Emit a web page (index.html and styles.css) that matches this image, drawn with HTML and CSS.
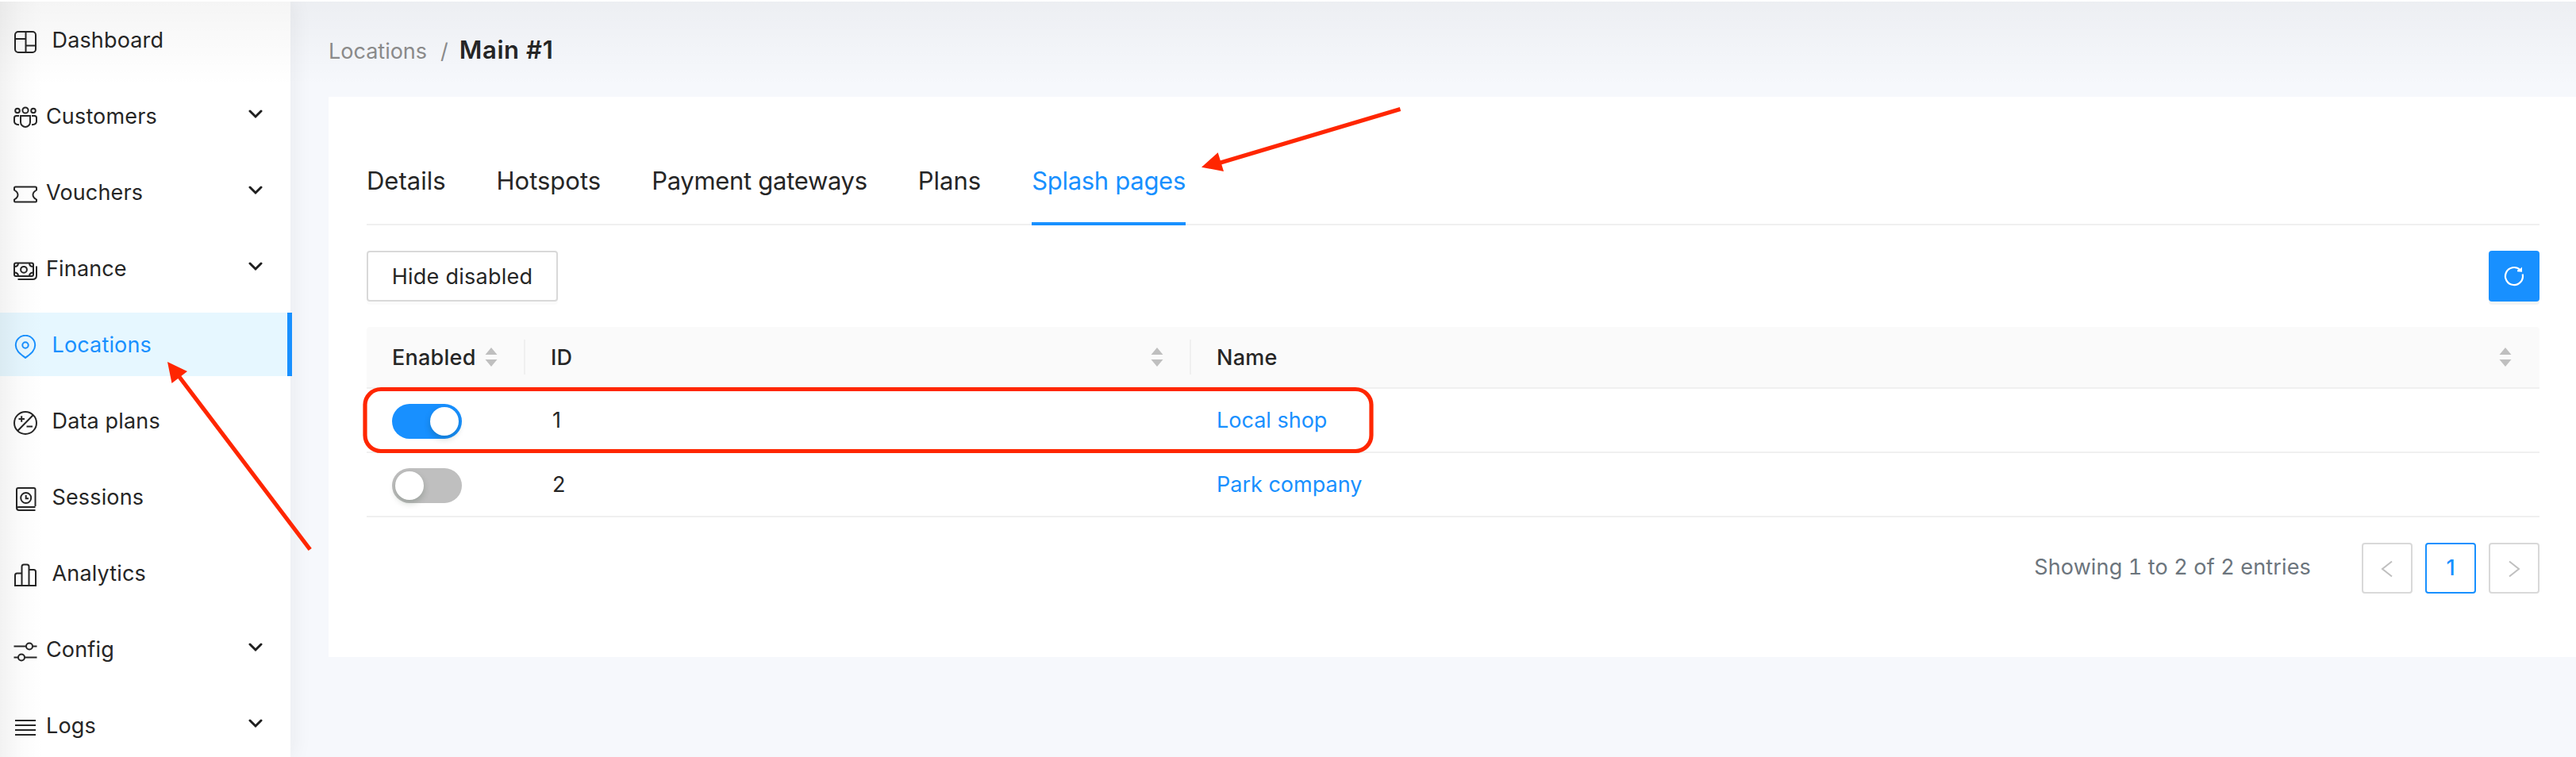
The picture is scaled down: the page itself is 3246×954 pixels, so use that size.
FILE: index.html
```html
<!DOCTYPE html>
<html lang="en">
<head>
<meta charset="utf-8">
<title>Main #1</title>
<link rel="stylesheet" href="styles.css">
</head>
<body>
<div class="app">
  <nav class="sidebar">
    <a class="item"><svg class="icon" viewBox="0 0 30 30"><rect x="2" y="2" width="26" height="26" rx="4"/><path d="M15.500 2v26M2 11h13.500M15.500 19.500H28"/></svg><span class="label">Dashboard</span></a>
    <a class="item sub"><svg class="icon" viewBox="0 0 30 30"><circle cx="5" cy="5.500" r="2.800"/><circle cx="15" cy="5" r="3.600"/><circle cx="25" cy="5.500" r="2.800"/><path d="M9 12h12v8c0 3.500-3 6-6 6s-6-2.500-6-6zM7 12H3.500Q1 12 1 14.500V19q0 4 6 4.300M23 12h3.500Q29 12 29 14.500V19q0 4-6 4.300"/></svg><span class="label">Customers</span><svg class="chev" viewBox="0 0 18 12"><path d="M2 2l7 7 7-7"/></svg></a>
    <a class="item sub"><svg class="icon" viewBox="0 0 30 30"><path d="M2.500 5.500h25q1.500 0 1.500 1.500v2.500q-4.500 2.500-4.500 6t4.500 6V23q0 1.500-1.500 1.500h-25Q1 24.500 1 23v-1.500q4.500-2.500 4.500-6T1 9.500V7q0-1.500 1.500-1.500z"/></svg><span class="label">Vouchers</span><svg class="chev" viewBox="0 0 18 12"><path d="M2 2l7 7 7-7"/></svg></a>
    <a class="item sub"><svg class="icon" viewBox="0 0 30 30"><rect x="1" y="5.500" width="24" height="16.500" rx="2"/><circle cx="13" cy="13.800" r="3.900"/><path d="M6 5.500Q6 10 1 10M20 5.500Q20 10 25 10M6 22q0-4.500-5-4.500M20 22q0-4.500 5-4.500M29 9.500V21q0 5-5 5H5.500"/></svg><span class="label">Finance</span><svg class="chev" viewBox="0 0 18 12"><path d="M2 2l7 7 7-7"/></svg></a>
    <a class="item active"><svg class="icon" viewBox="0 0 30 30"><path d="M15 29C9.500 24.500 2.800 20.500 2.800 13A12.200 12.200 0 0 1 27.200 13C27.200 20.500 20.500 24.500 15 29z"/><circle cx="15" cy="13" r="3.700"/></svg><span class="label">Locations</span></a>
    <a class="item"><svg class="icon" viewBox="0 0 30 30"><circle cx="15" cy="15" r="14"/><path d="M24.800 5L5.200 25M6.500 10h7.500M10.200 6.300v7.500M16.500 19.500h7.500"/></svg><span class="label">Data plans</span></a>
    <a class="item"><svg class="icon" viewBox="0 0 30 30"><path d="M27.500 24V3q0-2-2-2H6Q4 1 4 3v23q0 3 3 3h20.500M27.500 25H6.500Q4 25 4 27"/><circle cx="15.700" cy="13.500" r="6.500"/><path d="M15.700 10v4.200h3.300"/></svg><span class="label">Sessions</span></a>
    <a class="item"><svg class="icon" viewBox="0 0 30 30"><path d="M10.500 28V4q0-2.500 2.500-2.500h4q2.500 0 2.500 2.500v24M10.500 12.500H4.500Q2 12.500 2 15v13h26V10.500Q28 8 25.500 8h-6"/></svg><span class="label">Analytics</span></a>
    <a class="item sub"><svg class="icon" viewBox="0 0 30 30"><path d="M.5 8.500h15.300M24.200 8.500h5.300M.5 22.500h5.300M14.200 22.500h15.300"/><circle cx="20" cy="8.500" r="4"/><circle cx="10" cy="22.500" r="4"/></svg><span class="label">Config</span><svg class="chev" viewBox="0 0 18 12"><path d="M2 2l7 7 7-7"/></svg></a>
    <a class="item sub"><svg class="icon" viewBox="0 0 30 30"><path d="M2 6h26M2 12h26M2 18h26M2 24h26"/></svg><span class="label">Logs</span><svg class="chev" viewBox="0 0 18 12"><path d="M2 2l7 7 7-7"/></svg></a>
  </nav>
  <main class="main">
    <div class="crumbs"><span class="crumb">Locations</span><span class="slash">/</span><span class="current">Main #1</span></div>
    <section class="card">
      <div class="tabs">
        <a class="tab">Details</a><a class="tab">Hotspots</a><a class="tab long">Payment gateways</a><a class="tab">Plans</a><a class="tab long on">Splash pages</a>
      </div>
      <div class="toolbar">
        <button class="btn"><span>Hide disabled</span></button>
        <button class="refresh"><svg viewBox="0 0 28 28"><path d="M21.500 6A11 11 0 1 0 24.700 11.500"/><path class="solid" d="M24 2.500v6.300l-6-.6v-1.800l2.600-.6z"/></svg></button>
      </div>
      <div class="table">
        <div class="row head">
          <div class="cell"><span>Enabled</span><svg class="sort" viewBox="0 0 16 24"><path d="M8 0l7.500 9H.5zM8 24l7.500-9H.5z"/></svg></div>
          <div class="cell"><span>ID</span><svg class="sort" viewBox="0 0 16 24"><path d="M8 0l7.500 9H.5zM8 24l7.500-9H.5z"/></svg></div>
          <div class="cell"><span>Name</span><svg class="sort" viewBox="0 0 16 24"><path d="M8 0l7.500 9H.5zM8 24l7.500-9H.5z"/></svg></div>
        </div>
        <div class="row">
          <div class="cell"><span class="switch checked"><i></i></span></div>
          <div class="cell"><span class="num">1</span></div>
          <div class="cell"><a class="link">Local shop</a></div>
        </div>
        <div class="row">
          <div class="cell"><span class="switch"><i></i></span></div>
          <div class="cell"><span class="num">2</span></div>
          <div class="cell"><a class="link">Park company</a></div>
        </div>
      </div>
      <div class="pager">
        <span class="total">Showing 1 to 2 of 2 entries</span>
        <span class="page"><svg viewBox="0 0 16 22"><path d="M14 1.500L2 11l12 9.500"/></svg></span>
        <span class="page now"><b>1</b></span>
        <span class="page"><svg viewBox="0 0 16 22"><path d="M2 1.500L14 11 2 20.500"/></svg></span>
      </div>
    </section>
  </main>
  <svg class="marks" viewBox="0 0 3246 954">
    <rect x="460" y="490.500" width="1268" height="78" rx="20"/>
    <path d="M390.700 692.500L226 475M1764.500 137.500L1538 205"/>
    <path class="tip" d="M211 456l25 12-19.500 15zM1514 210.700l20.700-18.400 7.300 23.700z"/>
  </svg>
</div>
</body>
</html>
```
FILE: styles.css
```css
* { box-sizing: border-box; }
body {
  margin: 0;
  background: #f6f8fc;
  color: #262626;
  font: 27px/44px Inter, "Liberation Sans", sans-serif;
}
.app { position: relative; display: flex; width: 3246px; height: 954px; overflow: hidden; border-top: 2px solid #fff; }
.app::before, .app::after { content: ""; position: absolute; z-index: 2; left: 0; top: 0; pointer-events: none; }
.app::before { width: 54px; height: 952px; background: linear-gradient(90deg, rgba(0,0,0,.05), rgba(0,0,0,.016) 50%, rgba(0,0,0,0)); }
.app::after { width: 100%; height: 106px; background: linear-gradient(rgba(0,0,0,.04), rgba(0,0,0,.022) 40%, rgba(0,0,0,0)); }
.sidebar { width: 366px; flex: none; background: #fff; padding-top: 8px; display: flex; flex-direction: column; gap: 16px; box-shadow: 4px 0 24px rgba(29,35,41,.06); position: relative; z-index: 1; }
.item { display: flex; align-items: center; flex: none; height: 80px; padding-left: 17px; gap: 18.500px; color: #262626; }
.item.sub { gap: 11px; padding-right: 35px; }
.item.active { width: 368px; background: #e6f7ff; color: #1890ff; border-right: 6px solid #1890ff; }
.label { padding-top: 2px; letter-spacing: .15px; }
.icon { width: 30px; height: 30px; flex: none; margin-top: 5px; fill: none; stroke: currentColor; stroke-width: 2; }
.chev { width: 18px; height: 12px; margin: -4px 0 0 auto; fill: none; stroke: #1f1f1f; stroke-width: 3; stroke-linecap: round; }
.main { flex: 1; padding: 0 0 0 48px; }
.crumbs { display: flex; align-items: baseline; height: 120px; padding-top: 39px; color: #8c8c8c; }
.slash { margin: 0 14px 0 17px; }
.current { font-size: 31px; font-weight: 600; letter-spacing: .6px; color: #262626; }
.card { background: #fff; height: 706px; padding: 64px 46px 0 48px; }
.tabs { display: flex; gap: 64px; height: 98px; border-bottom: 2px solid #f0f0f0; font-size: 31px; }
.tab { height: 98px; line-height: 84px; }
.tab.long { letter-spacing: -.3px; }
.tab.on { color: #1890ff; border-bottom: 4px solid #1890ff; }
.toolbar { display: flex; justify-content: space-between; margin-top: 32px; }
.btn { width: 241px; height: 64px; padding: 2px 0 0; background: #fff; border: 2px solid #d9d9d9; border-radius: 4px; box-shadow: 0 4px 0 rgba(0,0,0,.016); font: inherit; letter-spacing: .25px; color: inherit; }
.refresh { width: 64px; height: 64px; padding: 0; border: 0; border-radius: 4px; background: #1890ff; box-shadow: 0 4px 0 rgba(0,0,0,.045); display: flex; align-items: center; justify-content: center; }
.refresh svg { width: 28px; height: 28px; fill: none; stroke: #fff; stroke-width: 2.200; }
.refresh .solid { fill: #fff; stroke: none; }
.table { margin-top: 32px; }
.row { display: grid; grid-template-columns: 200px 839px 1fr; height: 81px; border-bottom: 2px solid #f0f0f0; }
.head { height: 78px; background: #fafafa; border-radius: 4px 4px 0 0; font-weight: 500; letter-spacing: .25px; }
.cell { display: flex; align-items: center; padding: 0 32px; position: relative; }
.head .cell { padding-right: 35px; justify-content: space-between; }
.head .cell span { padding-top: 2px; }
.head .cell:not(:last-child)::after { content: ""; position: absolute; right: 0; top: 16px; width: 2px; height: 44px; background: #f0f0f0; }
.sort { width: 16px; height: 24px; fill: #bfbfbf; }
.switch { width: 88px; height: 44px; border-radius: 22px; background: #bfbfbf; padding: 4px; display: flex; margin-top: 3px; }
.switch i { width: 36px; height: 36px; border-radius: 50%; background: #fff; box-shadow: 0 4px 8px rgba(0,35,11,.2); }
.checked { background: #1890ff; justify-content: flex-end; }
.num { padding: 1px 0 0 2px; }
.link { color: #1890ff; padding-top: 1px; }
.pager { display: flex; justify-content: flex-end; gap: 16px; margin-top: 32px; }
.total { color: #6c757d; line-height: 62px; margin-right: 48px; font-feature-settings: "tnum"; letter-spacing: .15px; }
.page { width: 64px; height: 64px; border: 2px solid #d9d9d9; border-radius: 4px; display: flex; align-items: center; justify-content: center; }
.page svg { width: 16px; height: 22px; margin-top: 2px; fill: none; stroke: #bfbfbf; stroke-width: 2; }
.page b { font-weight: 500; }
.now { border-color: #1890ff; color: #1890ff; }
.marks { position: absolute; z-index: 3; left: 0; top: -2px; width: 3246px; height: 954px; fill: none; stroke: #ff2600; stroke-width: 5.200; pointer-events: none; }
.marks .tip { fill: #ff2600; stroke: none; }
```
